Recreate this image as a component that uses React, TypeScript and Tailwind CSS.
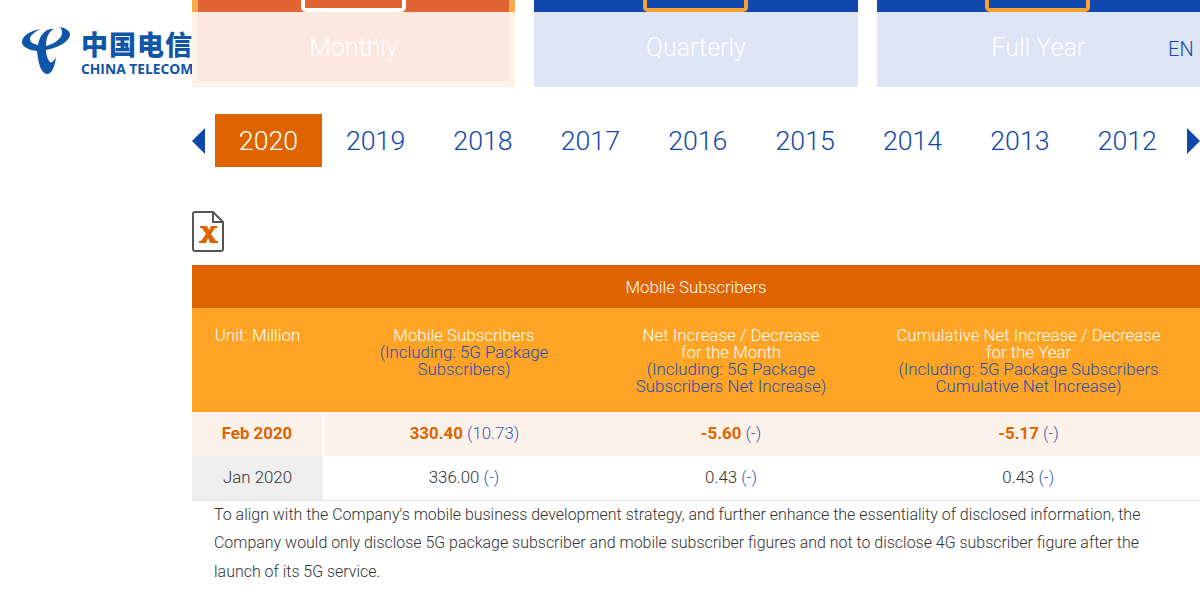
const years = ["2019", "2018", "2017", "2016", "2015", "2014", "2013", "2012"];

const blue = "text-[#2f5ab5]";

function Logo() {
  return (
    <div className="flex h-[87px] items-start pl-[15px] pt-[20px]">
      <svg width="60" height="60" viewBox="0 0 60 60" className="shrink-0">
        <path
          fill="#0f55a8"
          d="M25 9 C15 11 7 16 7 22 C7 27 14 30 22 31 C23 40 25 53 32 54 C37 54 40 46 41 37 C39 41 37 43 35 42 C33 40 31 35 31 30 C42 28 55 22 55 14 C55 11 50 8 45 7 C48 11 48 15 44 19 C40 23 35 25 31 26 C31 19 33 12 39 9 C31 8 25 14 23 25 C18 24 15 22 15 19 C15 15 20 12 25 9 Z"
        />
      </svg>
      <div className="ml-[6px] w-[112px] shrink-0 overflow-hidden pt-[6px] text-[#0f55a8]">
        <div className="whitespace-nowrap font-['Noto_Sans_CJK_SC',sans-serif] text-[27px] leading-[36px] font-black tracking-[1px]">中国电信</div>
        <div className="whitespace-nowrap font-['Open_Sans',sans-serif] text-[13.800px] leading-[14px] font-bold">CHINA TELECOM</div>
      </div>
    </div>
  );
}

function PeriodTab({ label, active }: { label: string; active?: boolean }) {
  return (
    <div className={`relative h-[87px] flex-1 ${active ? "bg-[#fdf2e3]" : "bg-[#dde4f3]"}`}>
      <div className={`h-[12px] ${active ? "mx-[6px] bg-[#e06434]" : "bg-[#1148ad]"}`} />
      {active && <div className="absolute left-0 top-0 h-[12px] w-[6px] bg-[#f9a94a]" />}
      {active && <div className="absolute right-0 top-0 h-[12px] w-[6px] bg-[#f9a94a]" />}
      <div
        className={`absolute left-1/2 top-0 h-[12px] w-[105px] -translate-x-[53px] rounded-b-[5px] border-x-[4px] border-b-[4px] ${
          active ? "border-white" : "border-[#f9a135]"
        }`}
      />
      <div className={`flex items-center justify-center text-[25px] font-light text-white ${active ? "mx-[6px] h-[69px] bg-[#fbe8e0] pt-[3px]" : "h-[75px] pb-[3px]"}`}>
        {label}
      </div>
    </div>
  );
}

function YearNav() {
  return (
    <div className="mt-[27px] flex h-[53px] items-center">
      <svg width="14" height="26" viewBox="0 0 14 26" className="shrink-0">
        <path d="M13 0 L0 13 L13 26 Z" fill="#0f47ad" />
      </svg>
      <div className="ml-[9px] flex h-[53px] w-[107px] items-center justify-center bg-[#df6400] pt-[2px] text-[26.700px] font-light text-white">2020</div>
      {years.map((y) => (
        <div key={y} className="flex h-[53px] w-[107.500px] items-center justify-center pt-[2px] text-[26.700px] font-light text-[#1148ad]">
          {y}
        </div>
      ))}
      <svg width="14" height="26" viewBox="0 0 14 26" className="ml-[5px] shrink-0">
        <path d="M1 0 L14 13 L1 26 Z" fill="#0f47ad" />
      </svg>
    </div>
  );
}

function ExcelIcon() {
  return (
    <svg width="32" height="41" viewBox="0 0 32 41" className="block">
      <path d="M1 3 Q1 1 3 1 L21 1 L31 11 L31 38 Q31 40 29 40 L3 40 Q1 40 1 38 Z" fill="#fff" stroke="#555" strokeWidth="2" />
      <path d="M21 1 L21 11 L31 11" fill="none" stroke="#555" strokeWidth="2" />
      <path
        d="M8 15 L15 15 L17 19 L19 15 L25 15 L25 17 L23 17 L19 23 L24 30 L26 30 L26 32 L18 32 L16 27 L14 32 L7 32 L7 30 L9 30 L14 23 L10 17 L8 17 Z"
        fill="#df6400"
      />
    </svg>
  );
}

function Paren({ children }: { children: string }) {
  return <span className={blue}>{children}</span>;
}

function SubscriberTable() {
  return (
    <table className="w-[1008px] table-fixed border-collapse text-center text-[16.850px] font-light">
      <colgroup>
        <col className="w-[131px]" />
        <col className="w-[282px]" />
        <col className="w-[252px]" />
        <col className="w-[343px]" />
      </colgroup>
      <thead>
        <tr className="h-[43px] bg-[#df6400] text-white">
          <th colSpan={4} className="pt-[2px] font-light">Mobile Subscribers</th>
        </tr>
        <tr className="h-[104px] bg-[#ffa424] align-top leading-[17px] text-white">
          <th className="pt-[19px] font-light">Unit: Million</th>
          <th className="px-[50px] pt-[19px] font-light">
            Mobile Subscribers
            <div className="text-[#1e4fb4]">(Including: 5G Package Subscribers)</div>
          </th>
          <th className="pt-[19px] font-light">
            Net Increase / Decrease
            <br />
            for the Month
            <div className="text-[#1e4fb4]">
              (Including: 5G Package
              <br />
              Subscribers Net Increase)
            </div>
          </th>
          <th className="pt-[19px] font-light">
            Cumulative Net Increase / Decrease
            <br />
            for the Year
            <div className="text-[#1e4fb4]">
              (Including: 5G Package Subscribers
              <br />
              Cumulative Net Increase)
            </div>
          </th>
        </tr>
      </thead>
      <tbody>
        <tr className="h-[44px] bg-[#fdf2e9] text-[#df6400]">
          <td className="border-r-2 border-white font-bold">Feb 2020</td>
          <td><b className="font-bold">330.40</b> <Paren>(10.73)</Paren></td>
          <td><b className="font-bold">-5.60</b> <Paren>(-)</Paren></td>
          <td><b className="font-bold">-5.17</b> <Paren>(-)</Paren></td>
        </tr>
        <tr className="h-[44px] border-b border-[#e8e8e8] text-[#333]">
          <td className="bg-[#eeeeee]">Jan 2020</td>
          <td>336.00 <Paren>(-)</Paren></td>
          <td>0.43 <Paren>(-)</Paren></td>
          <td className="border-r border-[#e8e8e8]">0.43 <Paren>(-)</Paren></td>
        </tr>
      </tbody>
    </table>
  );
}

export default function App() {
  return (
    <div className="relative flex h-[608px] w-[1200px] overflow-hidden bg-white font-['Roboto',sans-serif]">
      <div className="w-[192px] shrink-0">
        <Logo />
      </div>
      <div className="w-[1008px] shrink-0">
        <div className="flex gap-[19px]">
          <PeriodTab label="Monthly" active />
          <PeriodTab label="Quarterly" />
          <PeriodTab label="Full Year" />
        </div>
        <YearNav />
        <div className="mt-[44px] h-[54px]">
          <ExcelIcon />
        </div>
        <SubscriberTable />
        <p className="px-[22px] text-[15.960px] leading-[28.500px] font-light text-[#333]">
          To align with the Company's mobile business development strategy, and further enhance the essentiality of disclosed information, the Company would only disclose 5G package subscriber and mobile subscriber figures and not to disclose 4G subscriber figure after the launch of its 5G service.
        </p>
      </div>
      <a className="absolute left-[1168px] top-[34px] text-[20px] font-light text-[#1148ad]">EN</a>
    </div>
  );
}
